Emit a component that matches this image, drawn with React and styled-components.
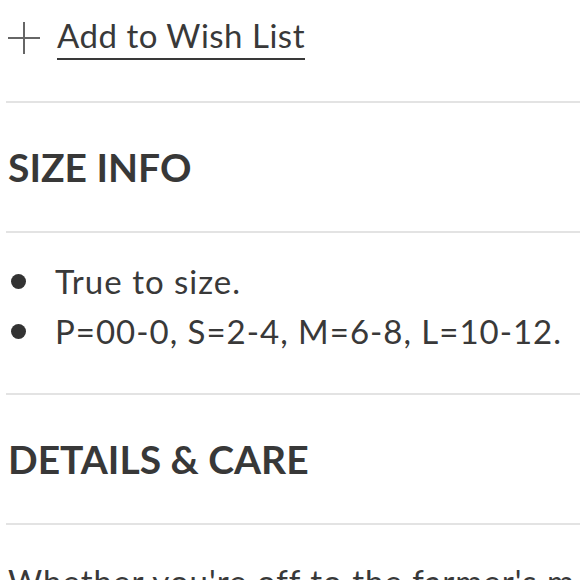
import React from "react";
import styled, { createGlobalStyle } from "styled-components";

const Global = createGlobalStyle`
  html, body { margin: 0; padding: 0; background: #fff; }
  body { overflow: hidden; font-family: Lato, "Open Sans", sans-serif; color: #393939; }
`;

const Page = styled.div`
  width: 580px;
  padding-left: 6px;
  box-sizing: border-box;
  overflow: hidden;
`;

const WishRow = styled.div`
  display: flex;
  align-items: flex-start;
  gap: 17px;
  height: 101px;
  padding: 15px 0 0 2px;
  box-sizing: border-box;
`;

const PlusIcon = styled.svg`
  width: 32px;
  height: 32px;
  margin-top: 7px;
  flex: none;
`;

const WishLink = styled.a`
  font-size: 33px;
  line-height: 40px;
  letter-spacing: 0.5px;
  color: #393939;
  text-decoration: none;
  padding-bottom: 3px;
  border-bottom: 2px solid #393939;
`;

const Divider = styled.hr`
  margin: 0;
  border: none;
  border-top: 2px solid #e3e3e3;
  width: 100%;
`;

const HeadingBlock = styled.div`
  height: 128px;
  display: flex;
  align-items: center;
  padding-left: 2px;
`;

const Heading = styled.h2`
  margin: 0;
  font-size: 39px;
  font-weight: 700;
  letter-spacing: 0;
  color: #383838;
`;

const List = styled.ul`
  list-style: none;
  margin: 0;
  padding: 23px 0 37px 2px;
`;

const Item = styled.li`
  display: flex;
  align-items: center;
  font-size: 33px;
  line-height: 50px;
  letter-spacing: 1px;
  white-space: nowrap;
`;

const Bullet = styled.span`
  width: 15px;
  height: 15px;
  border-radius: 50%;
  background: #333;
  flex: none;
  margin: 0 29px 0 3px;
`;

const Paragraph = styled.p`
  margin: 0;
  padding: 31px 0 0 2px;
  font-size: 33px;
  line-height: 50px;
  letter-spacing: 1px;
  white-space: nowrap;
`;

export default function App() {
  return (
    <Page>
      <Global />
      <WishRow>
        <PlusIcon viewBox="0 0 32 32">
          <path d="M16 0V32M0 16H32" stroke="#666" strokeWidth="2" fill="none" />
        </PlusIcon>
        <WishLink href="#">Add to Wish List</WishLink>
      </WishRow>
      <Divider />
      <HeadingBlock>
        <Heading>SIZE INFO</Heading>
      </HeadingBlock>
      <Divider />
      <List>
        <Item><Bullet />True to size.</Item>
        <Item><Bullet />P=00-0, S=2-4, M=6-8, L=10-12.</Item>
      </List>
      <Divider />
      <HeadingBlock>
        <Heading>DETAILS &amp; CARE</Heading>
      </HeadingBlock>
      <Divider />
      <Paragraph>Whether you're off to the farmer's m</Paragraph>
    </Page>
  );
}
